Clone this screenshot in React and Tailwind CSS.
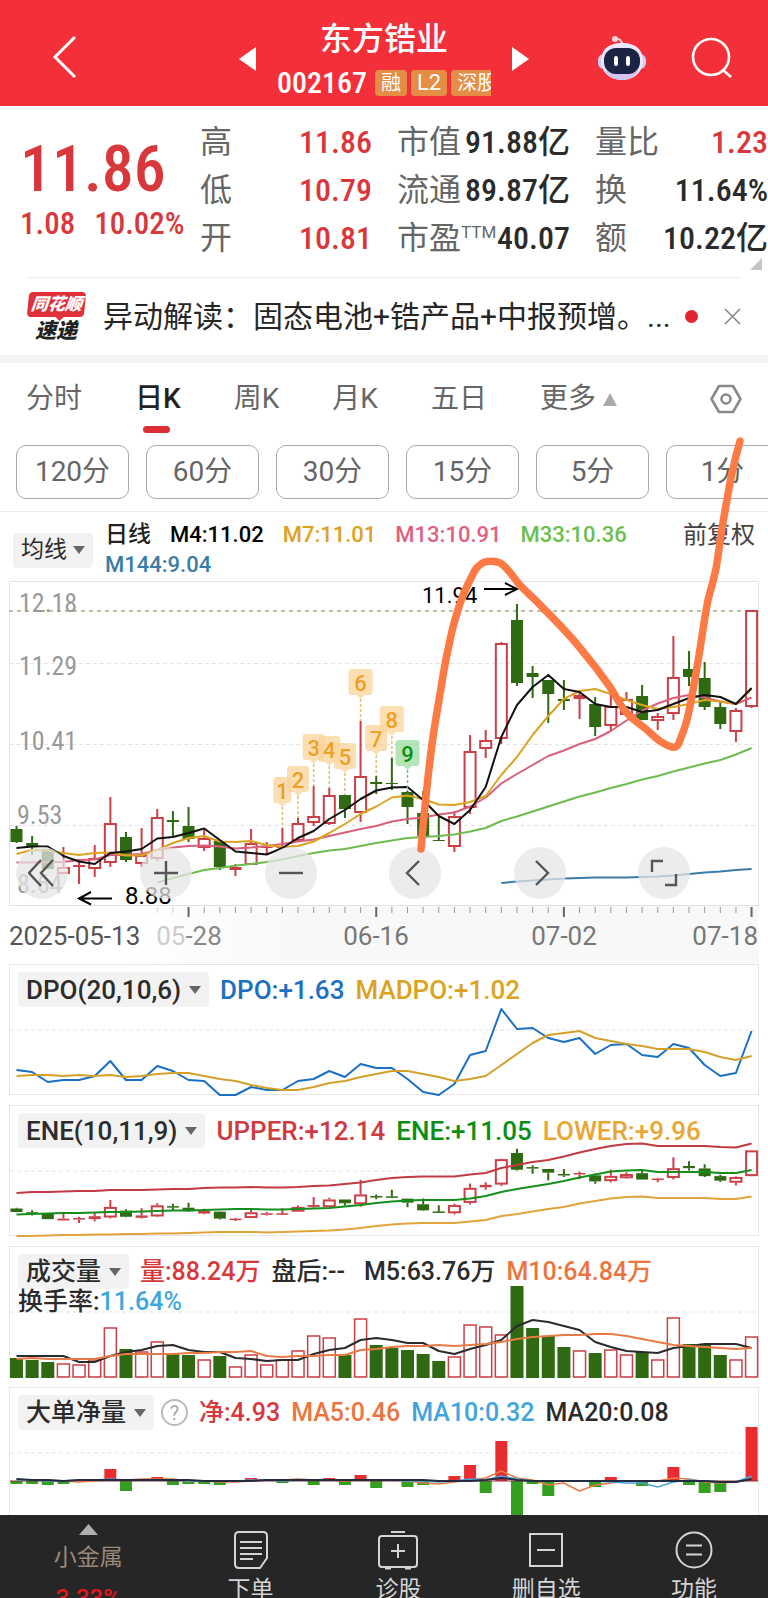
import React from "react";

const UP = "#cc3f47";
const DOWN = "#2f6a12";
const GRID = "#e4e4e4";
const NUM = "font-['Roboto_Condensed','Liberation_Sans_Narrow','Roboto','Noto_Sans_CJK_SC',sans-serif]";

// [rising, high, body top, body bottom, low] in chart units
const CANDLES = [
  [0, 826, 829, 842, 843], [0, 836, 843, 847, 855], [0, 849, 849, 869, 869], [1, 847, 867, 874, 874],
  [1, 860, 865, 867, 884], [1, 845, 858, 869, 877], [1, 797, 823, 863, 867], [0, 832, 837, 860, 862],
  [1, 828, 855, 864, 867], [1, 809, 817, 859, 861], [0, 811, 820, 822, 836], [0, 807, 826, 839, 842],
  [1, 830, 838, 848, 851], [0, 840, 841, 867, 870], [1, 864, 867, 870, 876], [1, 829, 843, 865, 865],
  [1, 842, 847, 848, 855], [1, 828, 847, 848, 848], [1, 818, 823, 841, 842], [1, 786, 816, 823, 826],
  [1, 788, 795, 824, 825], [0, 795, 795, 809, 818], [1, 721, 776, 813, 822], [0, 776, 782, 784, 794],
  [0, 758, 783, 784, 790], [0, 791, 792, 807, 824], [0, 791, 813, 836, 837], [0, 817, 840, 841, 841],
  [1, 811, 816, 847, 852], [1, 735, 751, 808, 814], [1, 730, 740, 749, 758], [1, 642, 643, 739, 744],
  [0, 604, 620, 683, 686], [0, 666, 673, 677, 698], [0, 680, 680, 694, 723], [0, 680, 699, 701, 710],
  [1, 691, 695, 699, 719], [0, 697, 704, 727, 736], [1, 683, 706, 726, 731], [1, 692, 699, 715, 717],
  [0, 685, 696, 720, 720], [1, 713, 716, 721, 730], [1, 636, 677, 714, 720], [0, 651, 669, 677, 686],
  [0, 662, 678, 707, 710], [0, 702, 707, 724, 729], [1, 708, 710, 732, 742], [1, 610, 610, 707, 708],
];

const M4 = [848,846.5,846.5,856,861.5,864,853,851.5,849,838.5,837,833,828.5,840,851.5,853,854.5,848,838,831,819,810,799,790.5,787.5,787,800,816,824,810,787,737,705,687,675,689,692,704,707,707,712,710,704,698,695,697,704,688];
const M7 = [854,850,850.5,853,855,853,852.5,855.5,855.5,850,843,838,836,841.5,842,841,845,847,846,841.5,833,824,814,806.5,797.5,795.5,799,804.5,805,802,796,775,757,735,716,699,691,689,694,700,705,709,707,704,700,701.5,704,689];
const M13 = [862.5,862.5,862,862,860,859.5,855,855,854,850,847.5,846,845.5,846.5,848.5,847.5,846,844,841.5,839.5,836,832.5,829,826,821.5,819,817.5,814.5,812.5,806.5,797.5,783.5,774,765,756,750.5,744,739,731,720.5,710.5,703.5,698,695,697.5,701.5,704,697.5];
const M33 = [882.5,878,874,870,868,865.5,864,862,859.5,856,853,850.5,849,846,843,840.5,838,837,836,834.5,831.5,828,821,816.5,811.5,806.5,801.5,796.5,792.5,788,784,779.5,776,771.5,767.5,763.5,760,754.5,748];
const M144 = [883,881.5,880.5,879.5,878.5,878,877.5,877.5,877.5,877,876.5,875.5,874,872.5,871.5,870,869];

const DPO = [106,108,118,116,116,112,97,116,116,102,107,116,117,131,131,123,126,126,117,115,107,113,100,104,104,115,128,131,120,91,87,45,65,64,74,78,74,90,81,80,91,93,80,84,101,112,109,67];
const MADPO = [112,111,111,112,111,112,111,113,112,110,109,109,112,115,117,121,124,126,126,123,119,117,113,110,107,107,110,113,117,115,112,101,90,79,71,69,67,74,77,80,82,85,85,85,88,93,96,92];

const UPPER = [88,87,87,86.5,86,86,85,85,85,84.5,84,84,83,82.5,82.5,82,82.5,82.5,82,81,80.5,79,77.5,75,73,72,71.5,71.5,71.5,69.5,68,63,60,57,55,51.5,47.5,44,41,39,38.5,41,41,41,41,42,42.5,38.5];
const ENE = [109.5,109,108.5,108,108,107.5,107,107,106.5,106,105.5,105.5,105,104.5,104,104,104.5,104.5,104,103.5,103,101.5,100,98,96.5,95.5,95,95,95,93.5,91,87,84,81.5,79,76,72.5,69.5,66.5,65.5,65,67,67,67,67,68,68,65];
const LOWER = [131,131,130.5,130,130,129.5,129.5,129,129,128.5,128.5,128,127.5,127,127,127,127.5,127,126.5,126,125.5,124.5,123,121,119.5,118.5,118,118,118,116.5,115,111,109,106.5,104,102,98.5,96,93.5,92,91.5,93,93,93,93,94,94,91.5];

const VOLUME = [20,18,16,14,13,18,50,29,26,36,24,23,18,22,11,23,13,18,27,42,40,23,59,33,30,28,24,17,21,53,51,43,92,50,42,31,27,25,28,23,26,18,60,34,33,23,18,41];
const V5 = [110,110,110,110,116,116,110,106,104,100,99,104,106,106,112,113,115,114,114,108,104,102,94,92,94,97,97,105,108,103,99,94,80,74,76,80,84,96,101,105,106,107,102,100,98,98,98,102];
const V10 = [113,112,113,113,113,113,110,108,108,108,108,107,107,106,106,105,110,111,110,110,109,109,104,103,101,100,100,99,100,99,98,96,93,91,90,89,89,88,88,90,93,96,99,100,101,102,103,102];

const NET = [-3,-3,-4,-3,0,0,12,-10,0,4,-4,-3,-3,-4,0,3,0,-2,0,-4,3,-4,6,-7,0,-6,-4,0,5,16,-12,40,-34,-3,-15,0,0,-6,4,0,-5,0,14,-4,-12,-11,0,54];
const N5 = [93,93,93,94,95,94,93,93,92,92,92,94,94,95,95,94,93,93,92,93,93,94,93,93,93,94,96,97,95,93,91,84,91,93,98,96,104,98,96,94,94,94,91,92,95,96,95,91];
const N10 = [93,93,94,94,93,93,92,93,93,93,93,94,94,94,94,93,93,94,93,93,93,93,93,93,93,94,94,95,94,92,93,89,92,94,94,94,94,94,95,96,96,100,95,93,94,95,95,89];
const N20 = [92,93,93,94,93,93,93,93,93,93,93,93,94,94,94,94,93,93,93,93,93,93,93,93,93,93,93,94,94,94,93,91,93,94,94,94,94,94,94,94,94,94,94,94,94,95,95,92];

// [index, label, top, half width]
const MARKS = [[17, "1", 777, 9], [18, "2", 766, 11], [19, "3", 734, 11], [20, "4", 736, 11], [21, "5", 743, 11], [22, "6", 669, 12], [23, "7", 725, 11], [24, "8", 706, 12], [25, "9", 740, 12]];

const cx = (i) => 16.5 + i * 15.64;

function Line({ data, color, start = 0, width = 2 }) {
  const points = data.map((y, i) => `${cx(i + start).toFixed(1)},${y}`).join(" ");
  return <polyline points={points} fill="none" stroke={color} strokeWidth={width} strokeLinejoin="round" />;
}

function Candles({ map = (y) => y, thin = false }) {
  return CANDLES.map(([up, hi, top, bottom, lo], i) => {
    const x = cx(i);
    const color = up ? UP : DOWN;
    const t = map(top);
    const b = Math.max(map(bottom), t + (thin ? 1.5 : 1));
    const hollow = up && b - t > 4;
    return (
      <g key={i} stroke={color} strokeWidth="2">
        <path d={`M${x} ${map(hi)}V${t}M${x} ${b}V${map(lo)}`} />
        {hollow ? (
          <rect x={x - 5.5} y={t + 1} width="11" height={b - t - 2} fill="none" />
        ) : (
          <rect x={x - 6} y={t} width="12" height={b - t} fill={color} stroke="none" />
        )}
      </g>
    );
  });
}

function Caret() {
  return (
    <svg width="12" height="8" viewBox="0 0 12 8" aria-hidden="true">
      <path d="M0 0h12L6 8z" fill="#666" />
    </svg>
  );
}

function Chip({ children, small }) {
  return (
    <button type="button" className={`flex h-[35px] shrink-0 items-center rounded bg-[#f2f2f2] px-2 text-[#2c2c2c] ${small ? "gap-1.5" : "gap-2"}`}>
      {children}
      <Caret />
    </button>
  );
}

function Panel({ header, extra, children, label, large }) {
  return (
    <section aria-label={label} className="mx-[9px] mb-2.5 grid shrink-0 border border-[#e6e6e6]">
      <svg viewBox="10 1 748 129" className="w-full overflow-visible [grid-area:1/1]" aria-hidden="true">
        <path d="M10 66H758" stroke={GRID} strokeDasharray="4 3" />
        {children}
      </svg>
      <div className={`relative px-2 pt-[7px] leading-[26px] font-medium whitespace-nowrap [grid-area:1/1] ${large ? "text-[26px]" : "text-[25px]"}`}>
        <div className="flex h-[35px] items-center gap-[11px]">{header}</div>
        {extra}
      </div>
    </section>
  );
}

function Quote({ label, sup, value, red }) {
  return (
    <div className="flex items-center justify-between">
      <dt className="flex text-[32px] text-[#666]">
        {label}
        {sup && <span className="text-[17px] leading-[36px]">{sup}</span>}
      </dt>
      <dd className={`${NUM} text-[32px] font-medium ${red ? "text-[#d8383c]" : "text-[#2b2b2b]"}`}>{value}</dd>
    </div>
  );
}

function Header() {
  return (
    <header className="grid h-[106px] shrink-0 grid-cols-[1fr_auto_1fr] items-center bg-[#f33039] text-white">
      <button type="button" aria-label="返回" className="ml-[52px] w-7 pt-2">
        <svg width="26" height="44" viewBox="0 0 26 44" fill="none" stroke="#fff" strokeWidth="3"><path d="M23 2L3 22l20 20" /></svg>
      </button>
      <div className="flex items-center gap-[21px] pt-3">
        <button type="button" aria-label="上一只">
          <svg width="17" height="24" viewBox="0 0 17 24" fill="#fff"><path d="M17 0v24L0 12z" /></svg>
        </button>
        <div className="flex w-[214px] flex-col items-center">
          <h1 className="text-[32px] leading-[48px] font-medium">东方锆业</h1>
          <div className="flex h-[40px] w-full items-center gap-1 overflow-hidden text-[20px] leading-[26px]">
            <span className={`${NUM} mr-1 text-[30px] font-medium`}>002167</span>
            <span className="rounded-sm bg-[#e58d45] px-1.5">融</span>
            <span className="rounded-sm bg-[#e58d45] px-1.5 text-[22px]">L2</span>
            <span className="shrink-0 rounded-sm bg-[#e58d45] px-1.5">深股</span>
          </div>
        </div>
        <button type="button" aria-label="下一只">
          <svg width="17" height="24" viewBox="0 0 17 24" fill="#fff"><path d="M0 0v24l17-12z" /></svg>
        </button>
      </div>
      <div className="flex items-center justify-end gap-[44px] pt-2.5 pr-[35px]">
        <button type="button" aria-label="智能助手">
          <svg width="50" height="46" viewBox="0 0 50 46">
            <circle cx="18" cy="4" r="3" fill="#fdd5de" />
            <path d="M18 4q7-1 7 6" fill="none" stroke="#fdd5de" strokeWidth="2" />
            <rect x="1" y="19" width="48" height="15" rx="6" fill="#d3ccf6" />
            <path d="M25 8c15 0 21 8 21 18S38 45 25 45 4 36 4 26 10 8 25 8z" fill="#eee6fb" />
            <path d="M8 36c4 6 10 9 17 9s13-3 17-9z" fill="#d3c4ee" />
            <rect x="7" y="13" width="36" height="26" rx="12" fill="#1b2444" />
            <rect x="17" y="21" width="4" height="10" rx="2" fill="#fff" />
            <rect x="29" y="21" width="4" height="10" rx="2" fill="#fff" />
          </svg>
        </button>
        <button type="button" aria-label="搜索">
          <svg width="42" height="42" viewBox="0 0 42 42" fill="none" stroke="#fff" strokeWidth="2.6"><circle cx="20" cy="20" r="18" /><path d="M32 33l8 7" /></svg>
        </button>
      </div>
    </header>
  );
}

function Summary() {
  return (
    <section className="relative flex shrink-0 pt-3 text-[#d8383c]">
      <div className={`${NUM} w-[200px] shrink-0 pt-[18px] pl-5 font-medium`}>
        <div className="text-[64px] leading-[68px]">11.86</div>
        <div className="flex gap-[19px] text-[31px] leading-[40px]"><span>1.08</span><span>10.02%</span></div>
      </div>
      <dl className="grid flex-1 grid-cols-[172px_173px_1fr] gap-x-[25px] leading-[48px] whitespace-nowrap">
        <Quote label="高" value="11.86" red />
        <Quote label="市值" value="91.88亿" />
        <Quote label="量比" value="1.23" red />
        <Quote label="低" value="10.79" red />
        <Quote label="流通" value="89.87亿" />
        <Quote label="换" value="11.64%" />
        <Quote label="开" value="10.81" red />
        <Quote label="市盈" sup="TTM" value="40.07" />
        <Quote label="额" value="10.22亿" />
      </dl>
      <svg className="absolute right-1.5 -bottom-2" width="12" height="12" viewBox="0 0 12 12" aria-hidden="true"><path d="M12 0v12H0z" fill="#c4c4c4" /></svg>
    </section>
  );
}

function News() {
  return (
    <section className="mx-[27px] mt-[15px] flex h-[78px] shrink-0 items-center border-t border-[#eee]">
      <div className="flex w-[58px] shrink-0 flex-col items-center leading-none font-black italic">
        <div className="relative w-[57px] -skew-x-6 rounded-sm bg-[#e0303a] py-1 text-center text-[17px] text-white">同花顺
          <svg className="absolute top-full left-1/2" width="8" height="4" viewBox="0 0 8 4" aria-hidden="true"><path d="M0 0h8L4 4z" fill="#e0303a" /></svg>
        </div>
        <div className="pt-1 text-[21px] text-[#222]">速递</div>
      </div>
      <a href="#news" className="ml-[18px] flex-1 text-[30px] whitespace-nowrap text-[#262626]">异动解读：固态电池+锆产品+中报预增。...</a>
      <span className="size-[13px] shrink-0 rounded-full bg-[#e3262c]" />
      <button type="button" aria-label="关闭" className="ml-[26px] shrink-0">
        <svg width="17" height="17" viewBox="0 0 17 17" stroke="#888" strokeWidth="1.6"><path d="M1 1l15 15M16 1L1 16" /></svg>
      </button>
    </section>
  );
}

function Periods() {
  const tab = "relative text-[#666]";
  return (
    <>
      <nav className="flex h-[80px] shrink-0 items-center border-t-8 border-[#f4f4f4] px-[26px] text-[28px]">
        <div className="flex items-center gap-[53px]">
          <button type="button" className={tab}>分时</button>
          <button type="button" className="relative font-medium text-[#222]">日K
            <span className="absolute -bottom-[13px] left-2 h-[7px] w-[27px] rounded-full bg-[#dc2f35]" />
          </button>
          <button type="button" className={tab}>周K</button>
          <button type="button" className={tab}>月K</button>
          <button type="button" className={tab}>五日</button>
          <button type="button" className="flex items-center gap-[7px] text-[#666]">更多
            <svg width="14" height="13" viewBox="0 0 14 13" aria-hidden="true"><path d="M7 0l7 13H0z" fill="#aaa" /></svg>
          </button>
        </div>
        <button type="button" aria-label="设置" className="ml-auto">
          <svg width="32" height="30" viewBox="0 0 32 30" fill="none" stroke="#8a8a8a" strokeWidth="2.6"><path d="M9 2h14l7.500 13L23 28H9L1.500 15z" strokeLinejoin="round" /><circle cx="16" cy="15" r="4.500" /></svg>
        </button>
      </nav>
      <div className="flex shrink-0 gap-[17px] overflow-hidden border-b border-[#ececec] px-4 pt-[10px] pb-3 text-[28px] text-[#666]">
        {["120分", "60分", "30分", "15分", "5分", "1分"].map((p) => (
          <button key={p} type="button" className="h-[54px] w-[113px] shrink-0 rounded-[10px] border border-[#aaa]">{p}</button>
        ))}
      </div>
    </>
  );
}

function Tool({ label, children }) {
  return (
    <button type="button" aria-label={label} className="flex size-[52px] items-center justify-center rounded-full bg-[#e6e6e6]/75">
      <svg width="28" height="28" viewBox="0 0 28 28" fill="none" stroke="#555" strokeWidth="2.4">{children}</svg>
    </button>
  );
}

function MainChart() {
  return (
    <section aria-label="日K线" className="relative shrink-0">
      <div className="flex px-[13px] pt-2 text-[22px] leading-[30px] font-medium whitespace-nowrap">
        <div className="flex items-center pr-3 text-[23px] font-normal"><Chip small>均线</Chip></div>
        <div className="flex-1">
          <div className="flex gap-[19px]">
            <span className="text-[23px] text-[#222]">日线</span>
            <span className="text-black">M4:11.02</span>
            <span className="text-[#e0a020]">M7:11.01</span>
            <span className="text-[#e0607f]">M13:10.91</span>
            <span className="text-[#6abf4b]">M33:10.36</span>
            <button type="button" className="ml-auto text-[24px] font-normal text-[#444]">前复权</button>
          </div>
          <div className="text-[#3a7ca5]">M144:9.04</div>
        </div>
      </div>
      <svg viewBox="0 580 768 384" className="block w-full" fontFamily="Roboto" role="img" aria-label="K线图">
        <defs>
          <linearGradient id="axis" x1="0" y1="0" x2="1" y2="0"><stop offset="0.15" stopColor="#fff" /><stop offset="0.4" stopColor="#f8f8f8" /></linearGradient>
        </defs>
        <rect x="9" y="906" width="750" height="57" fill="url(#axis)" />
        <rect x="9.5" y="581.5" width="749" height="324" fill="none" stroke="#e2e2e2" />
        <path d="M9 663.500H758M9 744.500H758M9 825.500H758" stroke={GRID} strokeDasharray="4 3" />
        <path d="M9 611H758" stroke="#b3ab85" strokeWidth="1.500" strokeDasharray="4 4" />
        <g className={NUM} fontSize="26" fill="#999">
          <text x="19" y="612">12.18</text>
          <text x="19" y="675">11.29</text>
          <text x="19" y="750">10.41</text>
          <text x="17" y="824">9.53</text>
          <text x="17" y="893">8.64</text>
        </g>
        <Candles />
        <Line data={M144} start={31} color="#3a7ca5" />
        <Line data={M33} start={9} color="#6ebb50" />
        <Line data={M13} color="#d9607c" />
        <Line data={M7} color="#dba320" />
        <Line data={M4} color="#111" />
        {MARKS.map(([i, n, top, half]) => {
          const x = cx(i);
          const green = n === "9";
          return (
            <g key={n}>
              <path d={`M${x} ${top + 30}V${CANDLES[i][1]}`} stroke={green ? "#7fb98a" : "#e0c070"} strokeWidth="1.500" strokeDasharray="3 2" />
              <g fill={green ? "#9edba2" : "#fbd39a"} opacity="0.75">
                <rect x={x - half} y={top} width={half * 2} height="26" rx="3" />
                <path d={`M${x - 4} ${top + 26}h8l-4 4z`} />
              </g>
              <text x={x} y={top + 22} textAnchor="middle" fontSize="22" fontWeight="500" fill={green ? "#0a9010" : "#eca024"}>{n}</text>
            </g>
          );
        })}
        <g fill="none" stroke="#000" strokeWidth="2"><path d="M484 589h32M505 583l12 6-12 6M112 898.500H80M91 892l-12 6.500 12 6" /></g>
        <text x="422" y="603" fontSize="22">11.94</text>
        <text x="125" y="904" fontSize="24">8.88</text>
        {CANDLES.map((_, i) => {
          if (i < 9) return null;
          const major = i % 12 === 11;
          return <path key={i} d={`M${cx(i)} 907v${major ? 10 : 6}`} stroke={major ? "#666" : "#999"} strokeWidth={major ? 2 : 1} opacity={i < 11 ? 0.4 : 1} />;
        })}
        <g fontSize="26" fill="#777">
          <text x="9" y="945" fill="#555">2025-05-13</text>
          <text x="189" y="945" textAnchor="middle"><tspan fill="#ccc">05</tspan><tspan fill="#888">-28</tspan></text>
          <text x="376" y="945" textAnchor="middle">06-16</text>
          <text x="564" y="945" textAnchor="middle">07-02</text>
          <text x="758" y="945" textAnchor="end">07-18</text>
        </g>
      </svg>
      <div className="absolute right-[78px] bottom-[65px] left-4 flex justify-between">
        <Tool label="最早"><path d="M13 1L1 14l12 13M25 1L13 14l12 13" /></Tool>
        <Tool label="放大"><path d="M14 2v24M2 14h24" /></Tool>
        <Tool label="缩小"><path d="M2 14h24" /></Tool>
        <Tool label="左移"><path d="M18 2L6 14l12 12" /></Tool>
        <Tool label="右移"><path d="M10 2l12 12-12 12" /></Tool>
        <Tool label="全屏"><path d="M2 13V2h11M26 15v11H15" /></Tool>
      </div>
      <svg viewBox="0 432 768 532" className="pointer-events-none absolute bottom-0 left-0 w-full" aria-hidden="true">
        <path d="M421 849C424 815 427 785 430 760C433 735 436 717 439 700C442 682 445 662 448 650C451 634 454 622 458 610C461 599 465 590 470 580C474 572 476 567 480 565C484 560 498 560 503 565C508 569 513 576 518 583C526 592 535 599 543 608C556 621 569 634 580 648C591 661 601 674 610 687C616 696 620 706 627 713C633 720 640 724 647 730C652 734 657 740 663 743C668 746 673 748 675 747C679 746 679 743 680 740C683 733 685 727 687 720C691 703 694 685 697 667C701 645 704 620 708 600C711 588 715 576 717 563C720 542 723 520 727 500C730 480 735 459 740 441" fill="none" stroke="#fd7a45" strokeWidth="7.500" strokeLinecap="round" strokeLinejoin="round" />
      </svg>
    </section>
  );
}

function NavItem({ label, children }) {
  return (
    <button type="button" className="flex flex-1 flex-col items-center text-[23px] leading-[30px] text-[#d4d4d4]">
      <svg width="42" height="42" viewBox="0 0 42 42" fill="none" stroke="#d4d4d4" strokeWidth="2" className="mt-3.5 mb-1">{children}</svg>
      {label}
    </button>
  );
}

export default function App() {
  return (
    <div className="flex h-screen flex-col overflow-hidden bg-white font-['Roboto','Noto_Sans_CJK_SC',sans-serif]">
      <Header />
      <main className="flex min-h-0 flex-1 flex-col overflow-y-auto [scrollbar-width:none]">
        <Summary />
        <News />
        <Periods />
        <MainChart />
        <Panel
          label="DPO"
          large
          header={<><Chip>DPO(20,10,6)</Chip><span className="text-[#1b6fc4]">DPO:+1.63</span><span className="text-[#dba320]">MADPO:+1.02</span></>}
        >
          <Line data={DPO} color="#1b6fc4" />
          <Line data={MADPO} color="#d3a02c" />
        </Panel>
        <Panel
          label="ENE"
          large
          header={<><Chip>ENE(10,11,9)</Chip><span className="text-[#cf3a40]">UPPER:+12.14</span><span className="text-[#0a8f14]">ENE:+11.05</span><span className="text-[#eaa535]">LOWER:+9.96</span></>}
        >
          <Candles thin map={(y) => 45.5 + (y - 610.5) * 0.2655} />
          <Line data={UPPER} color="#c23a42" />
          <Line data={ENE} color="#148f1c" />
          <Line data={LOWER} color="#e0a43a" />
        </Panel>
        <Panel
          label="成交量"
          header={<><Chip>成交量</Chip><span className="text-[#d8383c]">量:88.24万</span><span className="text-[#2b2b2b]">盘后:--</span><span className="ml-2 text-[#2b2b2b]">M5:63.76万</span><span className="text-[#ec7440]">M10:64.84万</span></>}
          extra={<div className="text-[#2b2b2b]">换手率:<span className="text-[#41a5dd]">11.64%</span></div>}
        >
          {VOLUME.map((h, i) =>
            CANDLES[i][0] ? (
              <rect key={i} x={cx(i) - 6} y={132 - h} width="12" height={h - 1} fill="none" stroke={UP} strokeWidth="1.500" />
            ) : (
              <rect key={i} x={cx(i) - 6.5} y={132 - h} width="13" height={h} fill={DOWN} />
            )
          )}
          <Line data={V5} color="#2b2b2b" />
          <Line data={V10} color="#e77a45" />
        </Panel>
        <Panel
          label="大单净量"
          header={
            <>
              <Chip>大单净量</Chip>
              <button type="button" aria-label="说明" className="-ml-1 flex size-[27px] items-center justify-center rounded-full border-2 border-[#bbb] text-[20px] font-normal text-[#aaa]">?</button>
              <span className="text-[#d8383c]">净:4.93</span><span className="text-[#ec7440]">MA5:0.46</span><span className="text-[#41a5dd]">MA10:0.32</span><span className="text-[#2b2b2b]">MA20:0.08</span>
            </>
          }
        >
          {NET.map((v, i) => (
            <rect key={i} x={cx(i) - 6} y={v > 0 ? 94 - v : 94} width="12" height={Math.abs(v)} fill={v > 0 ? "#e92c30" : "#35a020"} />
          ))}
          <path d="M10 94H758" stroke="#8a3038" />
          <Line data={N5} color="#e77a45" width={1.5} />
          <Line data={N10} color="#4ba3d8" width={1.5} />
          <Line data={N20} color="#222b40" />
        </Panel>
      </main>
      <footer className="relative flex h-[83px] shrink-0 items-start overflow-hidden bg-[#262626]">
        <button type="button" className="flex w-[23%] flex-col items-center pt-[9px] text-[23px] leading-[34px] text-[#9a887b]">
          <svg width="19" height="11" viewBox="0 0 19 11" aria-hidden="true"><path d="M9.500 0L19 11H0z" fill="#b0b0b0" /></svg>
          <span className="pt-1.5">小金属</span>
          <span className="pt-1.5 text-[24px] font-medium text-[#e5171b]">3.33%</span>
        </button>
        <NavItem label="下单"><path d="M9 3h24q4 0 4 4v22l-7 10H9q-4 0-4-4V7q0-4 4-4zM10 13h22M10 19h22M10 25h22M10 30h13" /></NavItem>
        <NavItem label="诊股"><path d="M14 3h14M5 7h32q3 0 3 3v25q0 3-3 3H5q-3 0-3-3V10q0-3 3-3zM21 15v14M14 22h14M8 39.500h6M28 39.500h6" /></NavItem>
        <NavItem label="删自选"><path d="M5 5h32v32H5zM12 21h18" /></NavItem>
        <NavItem label="功能"><circle cx="21" cy="21" r="17.500" /><path d="M13 16.500h16M13 25.500h16" /></NavItem>
      </footer>
    </div>
  );
}
